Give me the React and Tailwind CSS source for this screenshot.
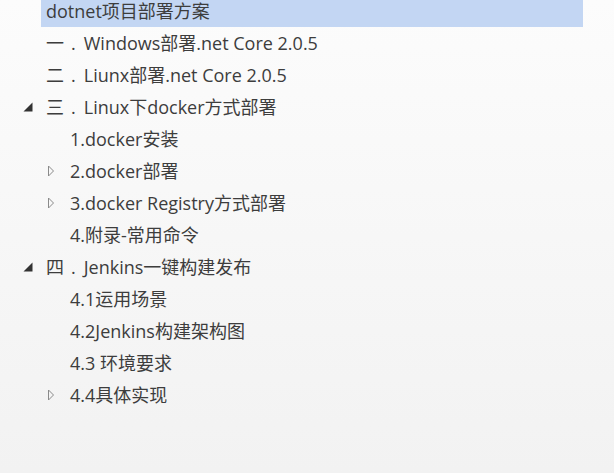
const items = [
  { label: 'dotnet项目部署方案', level: 0, selected: true },
  { num: '一', label: 'Windows部署.net Core 2.0.5', level: 0 },
  { num: '二', label: 'Liunx部署.net Core 2.0.5', level: 0 },
  { num: '三', label: 'Linux下docker方式部署', level: 0, toggle: 'open' },
  { label: '1.docker安装', level: 1 },
  { label: '2.docker部署', level: 1, toggle: 'closed' },
  { label: '3.docker Registry方式部署', level: 1, toggle: 'closed' },
  { label: '4.附录-常用命令', level: 1 },
  { num: '四', label: 'Jenkins一键构建发布', level: 0, toggle: 'open' },
  { label: '4.1运用场景', level: 1 },
  { label: '4.2Jenkins构建架构图', level: 1 },
  { label: '4.3 环境要求', level: 1 },
  { label: '4.4具体实现', level: 1, toggle: 'closed' },
]

function Toggle({ kind }) {
  if (kind === 'open') {
    return (
      <svg width="10" height="10" viewBox="0 0 10 10" className="block">
        <path d="M9.5 0.5 L9.5 9.5 L0.5 9.5 Z" fill="#333333" />
      </svg>
    )
  }
  return (
    <svg width="8" height="12" viewBox="0 0 8 12" className="block">
      <path d="M1.5 1 L6.5 6 L1.5 11 Z" fill="none" stroke="#8a8a8a" strokeWidth="1" />
    </svg>
  )
}

export default function App() {
  return (
    <div
      className="w-[614px] h-[473px] overflow-hidden bg-gradient-to-b from-[#fcfcfc] to-[#f2f2f2] text-[#3d3d3d] text-[18px]"
      style={{ fontFamily: '"Open Sans", "Noto Sans CJK SC", sans-serif' }}
    >
      <div className="mt-[-5px] flex flex-col">
        {items.map((it, i) => (
          <div key={i} className="h-[32px] flex items-center">
            {it.level === 0 ? (
              <div className="w-[41px] flex justify-end pr-[8px] shrink-0">
                {it.toggle && <Toggle kind={it.toggle} />}
              </div>
            ) : (
              <div className="w-[65px] flex justify-end pr-[10px] shrink-0">
                {it.toggle && <Toggle kind={it.toggle} />}
              </div>
            )}
            <div
              className={
                'h-full flex items-center pl-[5px] ' +
                (it.selected ? 'bg-[#c3d6f3] w-[542px]' : '')
              }
            >
              <span className="whitespace-nowrap leading-none">
                {it.num && (
                  <>
                    {it.num}
                    <span className="ml-[7px] mr-[8px]">.</span>
                  </>
                )}
                {it.label}
              </span>
            </div>
          </div>
        ))}
      </div>
    </div>
  )
}
